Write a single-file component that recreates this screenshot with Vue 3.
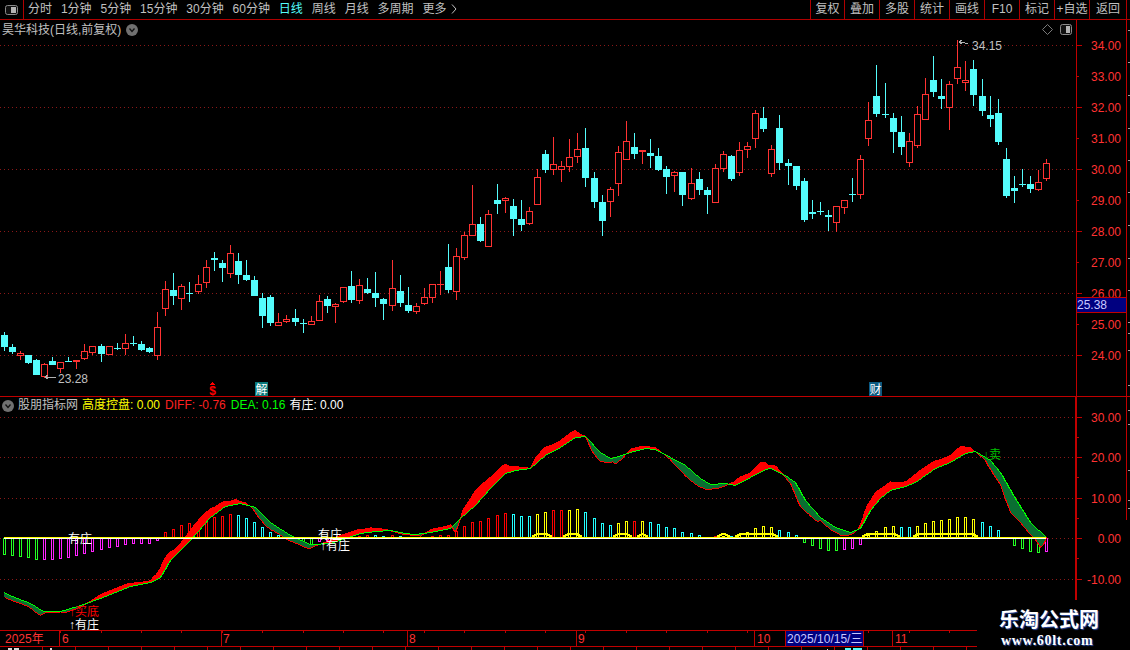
<script setup>
const navItems = ['分时','1分钟','5分钟','15分钟','30分钟','60分钟','日线','周线','月线','多周期','更多']
const buttons = ['复权','叠加','多股','统计','画线','F10','标记','+自选','返回']

// hi, bodyTop, bodyBottom, lo, red?
const raw = `332,335,347,351,0;344,347,352,354,0;351,353,356,360,1;355,355,363,364,0;359,360,375,375,0;363,364,377,378,1;357,361,365,365,0;362,362,369,373,1;357,361,362,362,0;360,360,362,369,1;344,351,359,360,1;346,346,353,355,1;344,346,354,362,0;346,346,355,355,1;343,348,349,350,0;334,343,349,355,1;336,343,344,346,0;341,344,350,351,0;347,348,352,353,0;312,327,356,360,1;281,289,309,316,1;273,290,296,305,0;284,286,299,310,1;282,293,294,302,0;275,284,292,294,1;260,267,283,288,1;252,258,260,271,0;260,263,268,282,0;245,253,274,278,1;253,261,275,284,0;260,275,280,281,0;276,280,296,296,0;293,298,316,328,0;295,297,323,326,0;313,322,326,326,1;315,319,322,323,1;309,318,322,326,0;319,323,324,333,0;316,321,325,325,1;295,301,321,321,1;296,299,306,313,0;303,304,307,323,1;287,287,302,303,1;271,286,300,303,0;279,285,301,304,1;278,289,293,294,0;272,293,298,307,0;298,299,304,320,0;260,288,306,311,1;275,291,303,307,0;287,305,311,313,0;303,306,312,314,1;288,297,304,305,1;284,284,298,303,1;271,284,285,295,1;244,267,290,293,0;248,256,292,300,1;232,235,258,260,1;185,224,236,236,1;217,224,241,242,0;210,214,247,247,1;184,200,204,214,0;197,198,201,213,1;199,206,219,236,0;200,219,225,231,0;207,211,224,225,1;169,177,205,205,1;150,154,170,173,0;137,164,170,175,1;161,166,170,182,1;139,157,167,172,1;133,149,157,163,1;128,148,178,187,0;172,178,202,208,0;195,202,221,236,0;187,189,202,217,1;146,152,184,196,1;121,141,160,160,1;133,147,154,159,0;150,150,152,164,1;139,153,156,168,0;148,156,170,171,0;166,169,177,194,0;171,172,176,192,1;172,172,195,206,0;168,183,199,200,1;172,179,190,195,0;187,190,195,214,0;164,168,203,203,1;151,154,169,172,1;155,156,179,181,0;142,150,173,176,1;142,146,150,158,1;110,113,139,148,1;107,118,129,132,0;145,149,174,177,1;115,128,163,170,0;159,163,166,185,0;166,166,186,190,0;178,181,220,222,0;200,212,214,219,0;202,211,212,215,0;210,215,217,231,0;206,206,223,232,1;200,200,208,214,1;178,194,195,202,0;155,159,195,199,1;102,120,139,146,1;65,96,114,117,0;83,114,115,118,0;113,118,132,153,0;116,132,147,155,0;133,141,163,167,1;106,114,146,148,1;78,94,120,120,1;56,80,92,97,0;79,96,99,109,0;81,84,108,130,1;40,67,79,84,1;61,80,83,91,1;60,69,95,106,0;79,96,111,116,0;96,115,119,127,0;99,113,142,145,0;148,159,196,198,0;176,188,191,203,0;169,184,185,187,0;176,184,189,193,0;170,182,190,191,1;159,163,179,181,1`

const jumps = [12,24,36,48,61,73,85,97,109,121]
const xOf = k => 4 + 8 * k + jumps.filter(j => j <= k).length

const candles = raw.split(';').map((s, k) => {
  const [hi, top, bot, lo, red] = s.split(',').map(Number)
  return { k, x: xOf(k), hi, top, bot, lo, red: !!red }
})

const barCols = { g:'#22ff22', m:'#ff22ff', r:'#ff0000', c:'#22ffff', y:'#ffff00' }
const barRaw = `-16g -17g -18g -19g -21g -21m -21m -20m -19m -17m -15m -13m -11m -9m -8m -6m -5m -5m -5m -2m 5r 8r 12r 14r 15r 17r 20r 21r 23r 22c 19c 15c 10c 5c 2c 1c 0c -4g -6g -3m -2m -1m 0c 1r 1r 2r 2c 1c 2r 1c 0c 0c 0c 1r 2r 2r 6r 11r 15r 16r 19r 22r 24r 23c 21c 21c 23y 25y 27r 27r 27y 28y 25c 19c 14c 12c 14y 16y 16r 16y 15c 13c 10c 9c 5c 4c 2c 0c 1r 1y 1c 2y 5y 9y 11y 10y 7c 5c 2c -4g -7g -10g -12g -12g -11m -10m -6m 2y 6y 10y 11y 10c 10c 11y 14y 16y 17y 18y 20y 20y 18y 15c 11c 7c 0c -7g -10g -13g -14g -13m`
const bars = barRaw.split(' ').map((s, k) => {
  const v = parseInt(s)
  const col = barCols[s.slice(-1)]
  const y = v > 0 ? 537 - v : 538
  return { k, x: xOf(k) - 1, y, h: Math.abs(v), col, v }
}).filter(b => b.v !== 0)

const greenPts = [[4,592],[12,596],[30,603],[43,611],[60,611],[80,605],[100,598],[130,586],[150,582],[160,577],[170,560],[190,540],[210,517],[225,506],[240,503],[255,507],[270,522],[290,535],[310,544],[330,543],[345,538],[360,533],[375,531],[390,530],[405,533],[415,534],[430,532],[450,528],[460,518],[475,505],[490,488],[505,473],[515,470],[530,468],[545,455],[560,447],[575,437],[585,436],[600,452],[610,458],[615,457],[630,452],[645,448],[655,449],[670,457],[685,465],[700,478],[710,484],[725,483],[735,485],[750,477],[765,469],[770,468],[785,475],[795,482],[805,500],[820,517],[835,527],[850,532],[860,528],[870,510],[880,498],[890,490],[905,486],[915,482],[935,468],[950,462],[965,453],[975,451],[990,460],[1000,472],[1015,498],[1030,522],[1046,537]]
const redPts = [[4,594],[12,598],[30,605],[40,612],[50,612],[65,611],[80,606],[100,596],[130,584],[150,581],[160,573],[170,558],[180,548],[190,535],[200,523],[210,513],[225,503],[235,500],[245,503],[255,509],[270,525],[290,538],[310,547],[330,540],[345,535],[360,530],[370,528],[385,529],[405,534],[420,535],[430,530],[445,527],[455,526],[465,510],[475,495],[490,482],[505,467],[515,467],[530,468],[545,450],[560,443],[575,432],[585,436],[600,457],[610,461],[615,462],[630,450],[645,446],[655,448],[670,458],[685,472],[700,483],[710,488],[720,487],[750,475],[760,465],[765,464],[775,468],[790,480],[800,497],[810,510],[825,522],[840,533],[850,534],[860,527],[875,498],[890,484],[905,483],[920,473],[935,463],[950,457],[960,449],[970,448],[985,458],[1000,477],[1010,503],[1025,520],[1040,542],[1046,537]]

const interp = (pts, x) => {
  for (let i = 1; i < pts.length; i++) {
    if (x <= pts[i][0]) {
      const [a, b] = pts[i - 1], [c, d] = pts[i]
      return b + (d - b) * (x - a) / (c - a)
    }
  }
  return pts[pts.length - 1][1]
}

let fillRed = '', fillGreen = '', lineRed = '', lineGreen = ''
for (let x = 4; x <= 1046; x++) {
  const gv = interp(greenPts, x)
  const rv = interp(redPts, x)
  const d = rv - gv
  const slope = Math.abs(interp(greenPts, x + 4) - interp(greenPts, x - 4)) / 8
  const widen = Math.sign(d) * Math.min(Math.abs(d), 2) / 2 * slope * 5
  const g = Math.round(gv)
  const r = Math.round(gv + d + widen)
  if (r < g) fillRed += `M${x + 0.5} ${r}V${g}`
  else if (g < r) fillGreen += `M${x + 0.5} ${g}V${r}`
  lineRed += `${x === 4 ? 'M' : 'L'}${x + 0.5} ${r + 0.5}`
  lineGreen += `${x === 4 ? 'M' : 'L'}${x + 0.5} ${g + 0.5}`
}

const humpSpans = [[532,552],[563,582],[613,632],[637,648],[717,730],[735,778],[862,900],[913,978]]
const humps = humpSpans.map(([a, b]) => `${a},537 ${a + 3},535 ${a + 6},534 ${b - 6},534 ${b - 3},535 ${b},537`)

const priceLabels = [34,33,32,31,30,29,28,27,26,25,24].map(p => ({ p, label: p.toFixed(2), y: 45.5 + (34 - p) * 31 }))
const gridPrice = priceLabels.filter(p => p.p % 2 === 0)
const indLabels = [['30.00',417.5],['20.00',457.5],['10.00',498.5],['0.00',538.5],['-10.00',579.5]]
const indMinor = [437.5,477.5,518.5,558.5]

const topTicks = []
for (let k = 7; k < 120; k += 5) topTicks.push(xOf(k))
const botTicks = []
for (let x = 42; x < 977; x += 33) botTicks.push(x)
const edgeMarks = [30,62,95,128,160,192,225,258,290,322,333,350,385,410,424,470,500,508]

const months = [['6',59,62],['7',221,223],['8',407,409],['9',576,578],['10',754,757],['11',892,895]]
</script>

<template>
  <div class="screen">
    <header class="topbar">
      <div class="side-toggle">
        <svg width="13" height="10" viewBox="0 0 13 10" class="block">
          <rect x="0.5" y="0.5" width="12" height="9" rx="2" fill="#111" stroke="#8a8a8a" />
          <rect x="6" y="2" width="5" height="6" fill="#b4b4b4" />
        </svg>
      </div>
      <nav class="periods">
        <span v-for="n in navItems" :key="n" :class="{ active: n === '日线' }">
          {{ n }}<svg v-if="n === '更多'" class="more" width="6" height="10" viewBox="0 0 6 10"><path d="M1 0.5 L5 5 L1 9.5" fill="none" stroke="#c0c0c0" /></svg>
        </span>
      </nav>
      <div class="tools">
        <span v-for="b in buttons" :key="b">{{ b }}</span>
      </div>
    </header>

    <section class="panel price">
      <svg class="chart" width="1130" height="377" viewBox="0 20 1130 377" shape-rendering="crispEdges">
        <line v-for="g in gridPrice" :key="g.p" x1="0" :y1="g.y" x2="1076" :y2="g.y" class="dots" />
        <g v-for="c in candles" :key="c.k">
          <template v-if="c.red">
            <rect :x="c.x" :y="c.hi" width="1" :height="c.top - c.hi" fill="#ff3232" />
            <rect :x="c.x" :y="c.bot" width="1" :height="c.lo - c.bot" fill="#ff3232" />
            <rect v-if="c.bot - c.top > 2" :x="c.x - 2.5" :y="c.top + 0.5" width="6" :height="c.bot - c.top - 1" fill="#000" stroke="#ff3232" />
            <rect v-else :x="c.x - 3" :y="c.top" width="7" :height="c.bot - c.top" fill="#ff3232" />
          </template>
          <template v-else>
            <rect :x="c.x" :y="c.hi" width="1" :height="c.lo - c.hi" fill="#54fcfc" />
            <rect :x="c.x - 3" :y="c.top" width="7" :height="c.bot - c.top" fill="#54fcfc" />
          </template>
        </g>

        <path d="M959 42h3l3 1l3 1M959 42l3 -2M959 42l3 2" class="pointer" />
        <text x="972" y="50" class="tag">34.15</text>
        <path d="M45 377h11M45 377l3 -2M45 377l3 2" class="pointer" />
        <text x="58" y="383" class="tag">23.28</text>

        <path d="M212.5 382 l3 3 h-6 z" fill="#ff0000" />
        <text x="212.5" y="394.5" class="dollar">$</text>
        <rect x="255" y="382" width="13" height="14" fill="#0a7878" />
        <text x="255.5" y="394" class="flag">解</text>
        <rect x="869" y="382" width="13" height="14" fill="#0b5a80" />
        <text x="869.5" y="394" class="flag">财</text>

        <line x1="1076.5" y1="20" x2="1076.5" y2="396" class="axis" />
        <line x1="1126.5" y1="20" x2="1126.5" y2="396" class="axis" />
        <g v-for="p in priceLabels" :key="p.p">
          <line x1="1076" :y1="p.y" :x2="p.p % 2 === 0 ? 1082 : 1079" :y2="p.y" class="axis" />
          <text x="1121" :y="p.y + 4" class="num">{{ p.label }}</text>
        </g>
        <rect x="1076.5" y="297.5" width="50" height="15" fill="#000080" class="axis" />
        <text x="1077" y="309" class="last">25.38</text>
        <rect v-for="m in edgeMarks.filter(v => v < 397)" :key="m" x="1128" :y="m" width="2" height="1" fill="#a0a0a0" />
        <line x1="0" y1="396.5" x2="1130" y2="396.5" class="edge" />
      </svg>
      <div class="title-row">
        <span>昊华科技(日线,前复权)</span>
        <svg class="caret" width="12" height="12" viewBox="0 0 12 12">
          <circle cx="6" cy="6" r="6" fill="#707070" />
          <path d="M3.5 4.5 L6 7.5 L8.5 4.5" fill="none" stroke="#111" stroke-width="1.3" />
        </svg>
      </div>
      <div class="corner-icons">
        <svg width="11" height="11" viewBox="0 0 11 11"><path d="M5.5 0.5 L10.5 5.5 L5.5 10.5 L0.5 5.5 Z" fill="none" stroke="#7a7a7a" /></svg>
        <svg width="12" height="11" viewBox="0 0 12 11">
          <rect x="0.5" y="0.5" width="11" height="10" rx="2" fill="#111" stroke="#8a8a8a" />
          <rect x="6" y="2" width="4" height="7" fill="#b4b4b4" />
        </svg>
      </div>
    </section>

    <section class="panel indicator">
      <svg class="chart" width="1130" height="233" viewBox="0 397 1130 233" shape-rendering="crispEdges">
        <line v-for="l in indLabels" :key="l[0]" x1="0" :y1="l[1]" x2="1076" :y2="l[1]" class="dots" />
        <rect v-for="b in bars" :key="b.k" :x="b.x + 0.5" :y="b.y + 0.5" width="2" :height="b.h" fill="none" :stroke="b.col" />
        <path :d="fillRed" stroke="#ff0000" fill="none" />
        <path :d="fillGreen" stroke="#0a6e32" fill="none" />
        <path :d="lineRed" stroke="#ff0000" fill="none" />
        <path :d="lineGreen" stroke="#00ff00" fill="none" />
        <polyline v-for="(h, i) in humps" :key="i" :points="h" fill="none" stroke="#ffff00" stroke-width="2" />
        <rect x="4" y="537" width="1042" height="1" fill="#ffff00" />
        <rect x="4" y="538" width="1042" height="1" fill="#ffffff" />

        <text x="68" y="543" class="mark white">有庄</text>
        <text x="318" y="539" class="mark white">有庄</text>
        <text x="320" y="550" class="mark white">↑有庄</text>
        <text x="69" y="616" class="mark redm">↑买底</text>
        <text x="69" y="629" class="mark white">↑有庄</text>
        <text x="983" y="459" class="mark greenm">↓卖</text>

        <rect x="1075" y="397" width="2" height="203" fill="#c00000" />
        <line x1="1126.5" y1="397" x2="1126.5" y2="520" class="axis" />
        <g v-for="l in indLabels" :key="'t' + l[0]">
          <line x1="1076" :y1="l[1]" x2="1082" :y2="l[1]" class="axis" />
          <text x="1121" :y="l[1] + 4" class="num">{{ l[0] }}</text>
        </g>
        <line v-for="m in indMinor" :key="m" x1="1076" :y1="m" x2="1079" :y2="m" class="axis" />
        <rect v-for="m in edgeMarks.filter(v => v > 397)" :key="m" x="1128" :y="m" width="2" height="1" fill="#a0a0a0" />
      </svg>
      <div class="legend">
        <svg class="caret" width="12" height="12" viewBox="0 0 12 12">
          <circle cx="6" cy="6" r="6" fill="#707070" />
          <path d="M3.5 4.5 L6 7.5 L8.5 4.5" fill="none" stroke="#111" stroke-width="1.3" />
        </svg>
        <span class="source">股朋指标网</span>
        <span class="yellow">高度控盘: 0.00</span>
        <span class="red">DIFF: -0.76</span>
        <span class="green">DEA: 0.16</span>
        <span class="white-t">有庄: 0.00</span>
      </div>
    </section>

    <section class="timeline">
      <svg class="chart" width="1130" height="20" viewBox="0 630 1130 20" shape-rendering="crispEdges">
        <line x1="0" y1="630.5" x2="977" y2="630.5" class="edge" />
        <line x1="0" y1="646.5" x2="977" y2="646.5" class="edge" />
        <line v-for="t in topTicks" :key="'a' + t" :x1="t + 0.5" y1="631" :x2="t + 0.5" y2="633" class="edge" />
        <line v-for="t in botTicks" :key="'b' + t" :x1="t + 0.5" y1="647" :x2="t + 0.5" y2="650" class="edge" />
        <text x="5" y="643" class="num-l">2025年</text>
        <g v-for="m in months" :key="m[0]">
          <line :x1="m[1] + 0.5" y1="631" :x2="m[1] + 0.5" y2="646" class="edge" />
          <text :x="m[2]" y="643" class="num-l">{{ m[0] }}</text>
        </g>
        <rect x="786" y="631" width="77" height="15" fill="#000080" />
        <line x1="785.5" y1="631" x2="785.5" y2="646" class="edge" />
        <line x1="863.5" y1="631" x2="863.5" y2="646" class="edge" />
        <text x="787" y="643" class="date">2025/10/15/三</text>
        <rect x="8" y="648" width="4" height="2" fill="#ddd" />
        <rect x="14" y="648" width="5" height="2" fill="#ddd" />
        <rect x="50" y="648" width="2" height="2" fill="#ddd" />
        <rect x="827" y="649" width="1" height="1" fill="#ddd" />
        <rect x="845" y="648" width="6" height="2" fill="#54fcfc" />
        <rect x="853" y="648" width="9" height="2" fill="#54fcfc" />
      </svg>
    </section>

    <div class="watermark">
      <strong>乐淘公式网</strong>
      <em>www.60lt.com</em>
    </div>
  </div>
</template>

<style>
html, body { margin: 0; background: #000; }
</style>

<style scoped>
.screen {
  position: relative;
  width: 1130px;
  height: 650px;
  background: #000;
  overflow: hidden;
  display: flex;
  flex-direction: column;
  font-family: "Liberation Sans", "Noto Sans CJK SC", sans-serif;
  font-size: 12px;
  color: #c0c0c0;
}
.topbar {
  height: 19px;
  border-bottom: 1px solid #b00000;
  display: flex;
  align-items: center;
  flex: none;
}
.block { display: block; }
.side-toggle {
  width: 18px;
  height: 19px;
  border-right: 1px solid #b00000;
  display: flex;
  align-items: center;
  padding-left: 5px;
  margin-right: 4px;
}
.periods { display: flex; gap: 8.9px; white-space: nowrap; line-height: 19px; }
.periods .active { color: #54fcfc; }
.more { margin-left: 5px; vertical-align: -1px; }
.tools {
  margin-left: auto;
  margin-right: 3px;
  display: flex;
  line-height: 19px;
  height: 19px;
}
.tools span {
  width: 34px;
  text-align: center;
  border-left: 1px solid #b00000;
  white-space: nowrap;
}
.tools span:first-child { width: 33px; }
.tools span:last-child { width: 36px; border-right: 1px solid #b00000; }
.panel { position: relative; flex: none; }
.price { height: 377px; }
.indicator { height: 233px; }
.timeline { height: 20px; flex: none; }
.chart { display: block; }
.dots { stroke: #8a1818; stroke-dasharray: 1 3; }
.axis { stroke: #c00000; }
.edge { stroke: #c00000; }
.pointer { fill: none; stroke: #b0b0b0; }
.tag { fill: #c0c0c0; font-size: 12px; }
.num { fill: #ff3232; font-size: 12px; text-anchor: end; }
.num-l { fill: #ff3232; font-size: 12px; }
.last { fill: #c8c8ff; font-size: 12px; }
.date { fill: #c8c8ff; font-size: 12px; }
.dollar { fill: #ff0000; font-size: 12px; font-weight: 700; text-anchor: middle; }
.flag { fill: #fff; font-size: 12px; }
.mark { font-size: 12px; }
.white { fill: #fff; }
.redm { fill: #ff0000; }
.greenm { fill: #00c000; }
.title-row {
  position: absolute;
  left: 2px;
  top: 2px;
  display: flex;
  align-items: center;
  gap: 5px;
  line-height: 16px;
  white-space: nowrap;
}
.caret { display: block; flex: none; }
.corner-icons {
  position: absolute;
  left: 1042px;
  top: 4px;
  display: flex;
  gap: 7px;
}
.corner-icons svg { display: block; }
.legend {
  position: absolute;
  left: 2px;
  top: 1px;
  display: flex;
  align-items: center;
  gap: 5px;
  line-height: 15px;
  white-space: nowrap;
}
.legend .source { margin-left: -1px; }
.source { color: #c0c0c0; }
.yellow { color: #ffff00; margin-left: -1px; }
.red { color: #ff2020; }
.green { color: #00ff00; }
.white-t { color: #fff; margin-left: -1px; }
.watermark {
  position: absolute;
  left: 999px;
  top: 609px;
  display: flex;
  flex-direction: column;
  gap: 5px;
  color: #fff;
  text-shadow: 1px 1px 1px #2a4aa0;
}
.watermark strong { font-size: 20px; line-height: 20px; font-weight: 700; white-space: nowrap; font-family: "Noto Sans CJK SC", sans-serif; }
.watermark em { font-style: normal; font-family: "Liberation Serif", serif; font-weight: 700; font-size: 14px; line-height: 14px; letter-spacing: 0.7px; padding-left: 2px; white-space: nowrap; }
</style>
